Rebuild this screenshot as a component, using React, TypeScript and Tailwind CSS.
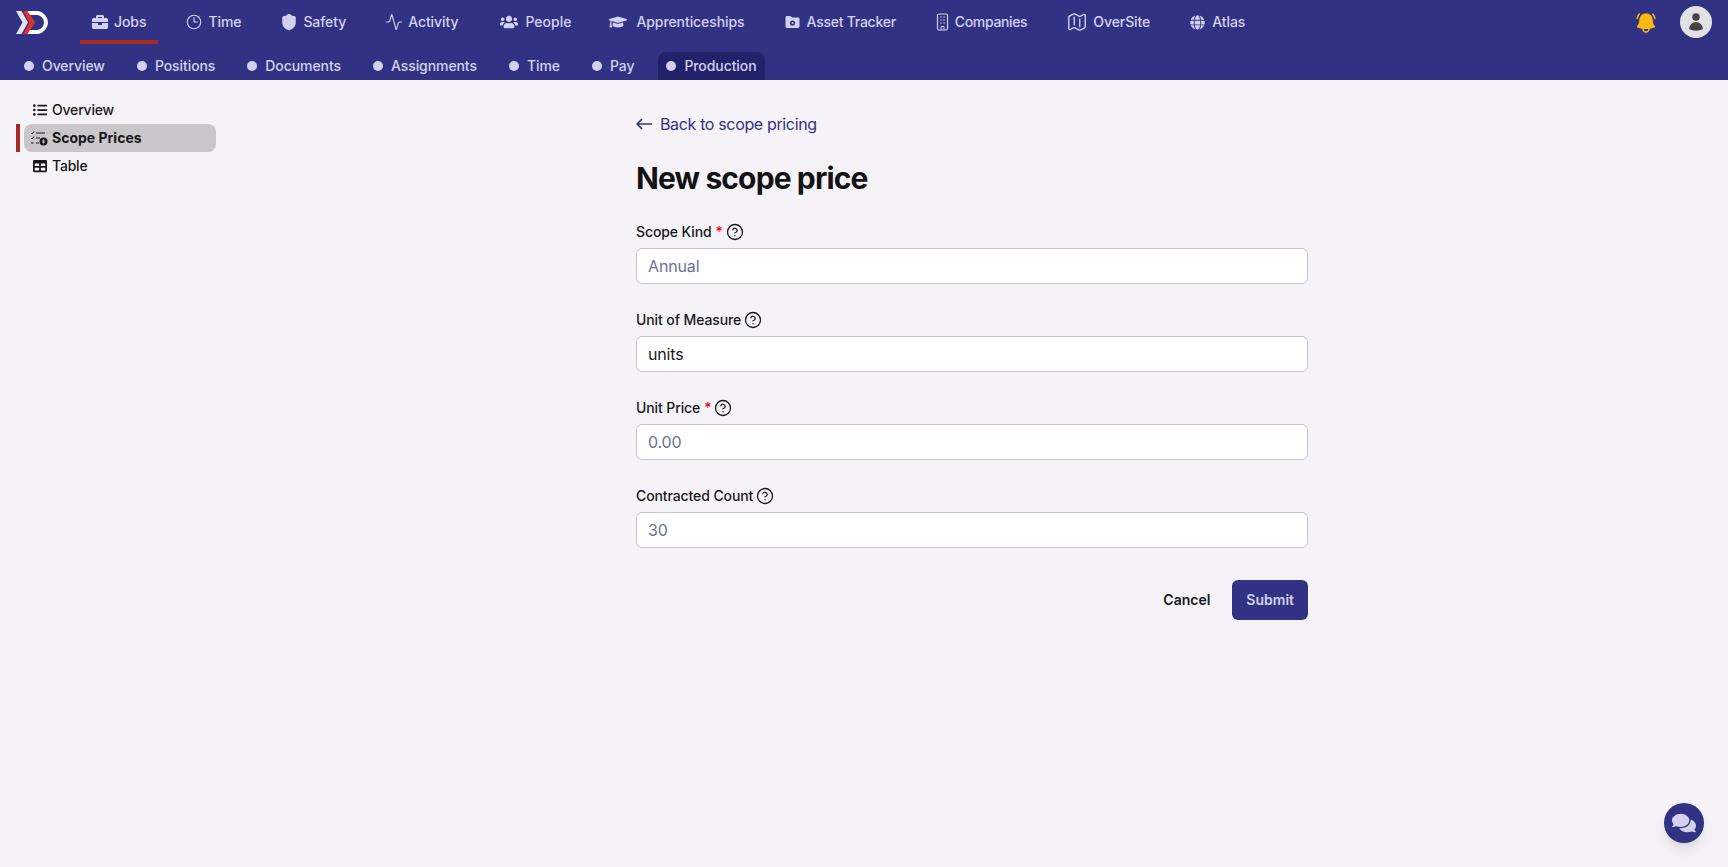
import { Activity, CircleHelp, Shield } from 'lucide-react';
import { FaBriefcase, FaComments, FaGlobe, FaGraduationCap, FaListUl, FaTable, FaUsers } from 'react-icons/fa';
import { HiBellAlert, HiOutlineClock, HiOutlineMap, HiUser } from 'react-icons/hi2';

const Logo = () => (
  <svg viewBox="0 0 32 23" className="w-8 h-[23px]">
    <polygon points="0,0 5.5,0 12,11.5 5.5,23 0,23 6.5,11.5" fill="#e3e3f3" />
    <polygon points="7,0 12,0 19,11.5 12,23 7,23 13.5,11.5" fill="#e0312e" />
    <path d="M11.5 0 H21 C27 0 32 6 32 11.5 C32 17 27 23 21 23 H11.5 L14 19 H21 C25 19 28 15 28 11.5 C28 8 25 4 21 4 H14 Z" fill="#ffffff" />
  </svg>
);

const FolderIcon = ({ className }: { className?: string }) => (
  <svg viewBox="0 0 16 16" className={className}>
    <path d="M1 3.5 C1 2.7 1.6 2 2.4 2 H6 L7.5 3.6 H13.6 C14.4 3.6 15 4.2 15 5 V12.6 C15 13.4 14.4 14 13.6 14 H2.4 C1.6 14 1 13.4 1 12.6 Z" fill="currentColor" />
    <circle cx="8" cy="9" r="2.6" fill="#323285" />
    <circle cx="8" cy="9" r="1" fill="currentColor" />
  </svg>
);

const BuildingIcon = ({ className }: { className?: string }) => (
  <svg viewBox="0 0 12 18" className={className} fill="none">
    <rect x="1" y="1" width="10" height="16" rx="1.5" stroke="currentColor" strokeWidth="1.2" />
    <path d="M4 4 H5 M7 4 H8 M4 7 H5 M7 7 H8 M4 10 H5 M7 10 H8" stroke="currentColor" strokeWidth="1.4" />
    <path d="M4.5 17 V13.5 H7.5 V17" stroke="currentColor" strokeWidth="1" />
  </svg>
);

const ScopeIcon = ({ className }: { className?: string }) => (
  <svg viewBox="0 0 18 16" className={className} fill="none">
    <path d="M1 3 L2 4 L4 1.5 M1 8 L2 9 L4 6.5 M1 13 H3.5" stroke="#1b1b1f" strokeWidth="1" />
    <path d="M6 3 H15 M6 8 H10 M6 13 H9" stroke="#1b1b1f" strokeWidth="1.2" />
    <circle cx="13.5" cy="11.5" r="4" fill="#1b1b1f" />
    <path d="M13.5 9.5 V13.5 M14.8 10.4 H12.9 C12.2 10.4 12.2 11.5 12.9 11.5 H14.1 C14.8 11.5 14.8 12.6 14.1 12.6 H12.2" stroke="#c9c7ca" strokeWidth="0.7" />
  </svg>
);

const tabs = [
  { label: 'Jobs', icon: <FaBriefcase className="w-4 h-4" />, active: true },
  { label: 'Time', icon: <HiOutlineClock className="w-[18px] h-[18px] -mx-px" /> },
  { label: 'Safety', icon: <Shield className="w-[18px] h-[18px] -mx-px" fill="currentColor" /> },
  { label: 'Activity', icon: <Activity className="w-[18px] h-[18px] -mx-px" strokeWidth={1.5} /> },
  { label: 'People', icon: <FaUsers className="w-[18px] h-[18px] ml-0.5 mr-px" />, extra: '-mr-0.5' },
  { label: 'Apprenticeships', icon: <FaGraduationCap className="w-[18px] h-[18px] mr-[3px]" /> },
  { label: 'Asset Tracker', icon: <FolderIcon className="w-[17px] h-4 -ml-px" />, extra: 'tracking-[-0.25px]' },
  { label: 'Companies', icon: <BuildingIcon className="w-[13px] h-[18px]" />, extra: 'tracking-[-0.35px]' },
  { label: 'OverSite', icon: <HiOutlineMap className="w-[22px] h-[22px] -mx-px" /> },
  { label: 'Atlas', icon: <FaGlobe className="w-[15px] h-[15px] mr-px" /> },
];

const subTabs = ['Overview', 'Positions', 'Documents', 'Assignments', 'Time', 'Pay', 'Production'];

const fields = [
  { label: 'Scope Kind', required: true, placeholder: 'Annual' },
  { label: 'Unit of Measure', value: 'units' },
  { label: 'Unit Price', required: true, placeholder: '0.00' },
  { label: 'Contracted Count', placeholder: '30' },
];

const App = () => {
  return (
    <div className="h-[867px] overflow-hidden bg-[#f5f3f7] font-[Inter,sans-serif] text-[#18181b] relative">
      {/* Top nav */}
      <header className="h-20 bg-[#323285] text-[#d2d2ee]">
        <div className="flex items-center h-11 pl-4 pr-4">
          <Logo />
          <nav className="flex h-full ml-8 gap-4">
            {tabs.map((tab) => (
              <div
                key={tab.label}
                className={`flex items-center gap-1.5 px-3 text-sm font-medium border-t-[4px] border-t-transparent border-b-[4px] ${tab.active ? 'border-b-[#a82a24]' : 'border-b-transparent'} ${tab.extra ?? 'tracking-[-0.08px]'}`}
              >
                {tab.icon}
                {tab.label}
              </div>
            ))}
          </nav>
          <div className="ml-auto flex items-center gap-[22px]">
            <HiBellAlert className="w-6 h-6 mt-px text-[#fdb913]" />
            <div className="w-8 h-8 rounded-full bg-[#e2e1e5] flex items-center justify-center">
              <HiUser className="w-5 h-5 text-[#444448]" />
            </div>
          </div>
        </div>
        <div className="flex h-7 mt-2 pl-4 gap-4">
          {subTabs.map((tab) => (
            <div
              key={tab}
              className={`flex items-center gap-2 px-2 text-sm font-medium tracking-[-0.08px] rounded-t-lg ${tab === 'Production' ? 'bg-[#22226b]' : ''}`}
            >
              <span className="w-2.5 h-2.5 rounded-full bg-[#d2d2ee]"></span>
              {tab}
            </div>
          ))}
        </div>
      </header>

      <div className="flex">
        {/* Sidebar */}
        <aside className="w-[216px] shrink-0 pt-4 pl-6 text-sm font-medium">
          <div className="flex items-center gap-1 h-7 pl-2 tracking-[-0.2px]">
            <FaListUl className="w-3.5 h-3.5 mx-px" />
            Overview
          </div>
          <div className="relative flex items-center gap-1 h-7 pl-2 rounded-lg bg-[#c9c7ca] font-bold">
            <span className="absolute -left-2 top-0 w-1 h-7 bg-[#a82a24]"></span>
            <ScopeIcon className="w-[18px] h-4 -ml-0.5" />
            Scope Prices
          </div>
          <div className="flex items-center gap-1 h-7 pl-2 tracking-[-0.2px]">
            <FaTable className="w-3.5 h-3.5 mx-px" />
            Table
          </div>
        </aside>

        {/* Form */}
        <main className="flex-1 pt-8">
          <div className="w-[672px] mx-auto">
            <a className="flex items-center gap-2 h-6 text-base tracking-[-0.35px] text-[#323285]">
              <svg viewBox="0 0 16 12" className="w-4 h-3" fill="none" stroke="currentColor" strokeWidth="1.6">
                <path d="M16 6 H1.2 M6 1 L1.2 6 L6 11" />
              </svg>
              Back to scope pricing
            </a>
            <h1 className="mt-6 mb-6 text-3xl font-bold tracking-[-0.88px] text-[#131316]">New scope price</h1>
            <div className="flex flex-col gap-6">
              {fields.map((field) => (
                <div key={field.label}>
                  <label className="flex items-center h-6 mb-1 text-sm font-medium tracking-[-0.1px]">
                    {field.label}
                    {field.required && <span className="ml-1 text-[#f00]">*</span>}
                    <CircleHelp className="ml-[3px] w-[18px] h-[18px]" strokeWidth={1.7} />
                  </label>
                  <input
                    className="block w-full h-9 px-[11px] text-base tracking-[-0.15px] bg-white border border-[#c6c5cb] rounded-md outline-none placeholder:text-[#6b7394]"
                    placeholder={field.placeholder}
                    defaultValue={field.value}
                  />
                </div>
              ))}
            </div>
            <div className="flex justify-end items-center gap-[10px] mt-8">
              <button className="h-10 px-3 text-sm font-semibold">Cancel</button>
              <button className="h-10 px-3.5 text-sm font-semibold rounded-md bg-[#323285] text-[#d2d2ee]">Submit</button>
            </div>
          </div>
        </main>
      </div>

      {/* Chat button */}
      <button className="absolute right-6 bottom-6 w-10 h-10 rounded-full bg-[#323285] flex items-center justify-center shadow-lg">
        <FaComments className="w-6 h-6 text-[#d2d2ee]" />
      </button>
    </div>
  );
};

export default App;
